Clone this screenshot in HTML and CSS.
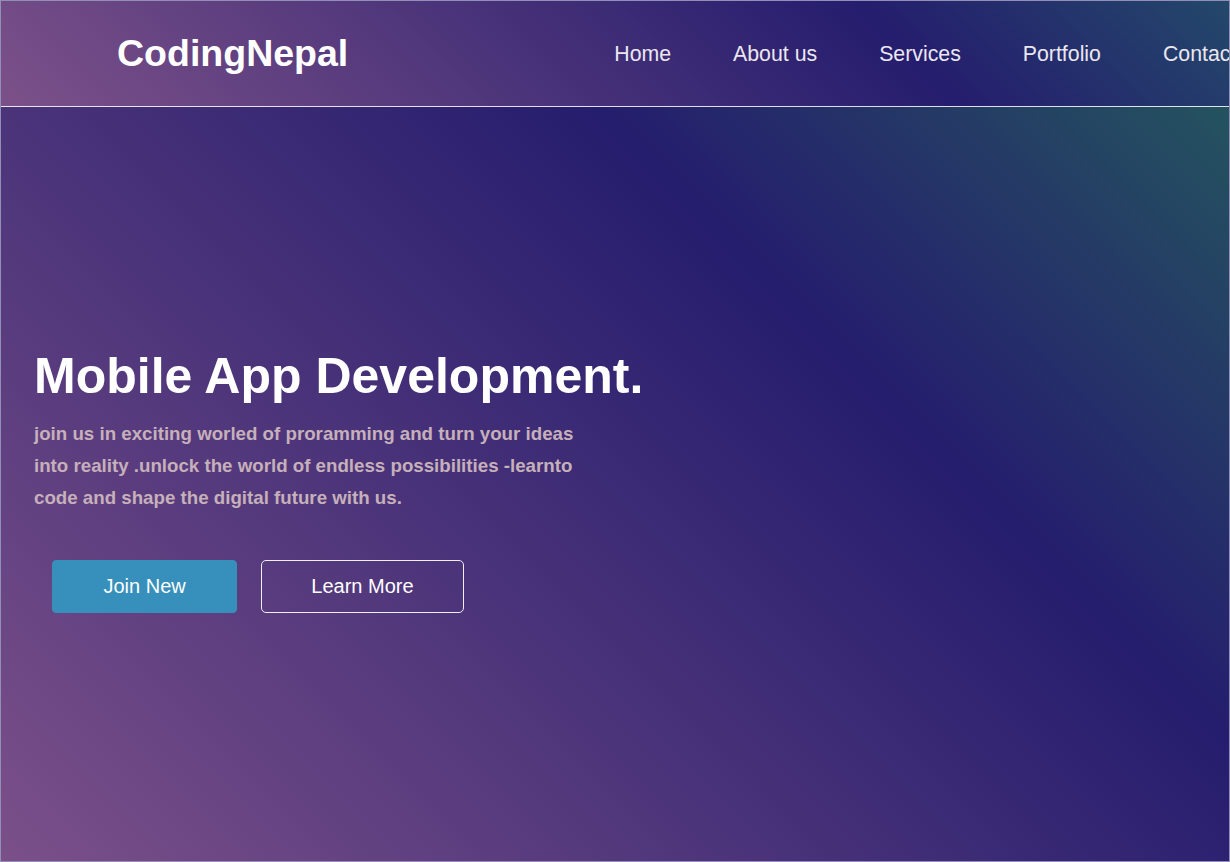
FILE: index.html
```html
<!DOCTYPE html>
<html lang="en">
<head>
<meta charset="utf-8">
<title>CodingNepal</title>
<link rel="stylesheet" href="styles.css">
</head>
<body>
<div class="page">
  <header class="header">
    <a class="logo" href="#">CodingNepal</a>
    <nav class="nav">
      <a href="#">Home</a>
      <a href="#">About us</a>
      <a href="#">Services</a>
      <a href="#">Portfolio</a>
      <a href="#">Contact</a>
    </nav>
  </header>
  <section class="hero">
    <div class="hero-content">
      <h1 class="title">Mobile App Development.</h1>
      <h3 class="lead">join us in exciting worled of proramming and turn your ideas into reality .unlock the world of endless possibilities -learnto code and shape the digital future with us.</h3>
      <div class="buttons">
        <a class="btn btn-primary" href="#">Join New</a>
        <a class="btn btn-outline" href="#">Learn More</a>
      </div>
    </div>
  </section>
</div>
</body>
</html>
```

FILE: styles.css
```css
* { box-sizing: border-box; }
html, body { margin: 0; padding: 0; }
body {
  font-family: "Liberation Sans", Arial, sans-serif;
  background: #251d6e;
}
a { text-decoration: none; color: inherit; }

.page {
  width: 1230px;
  height: 862px;
  border: 1px solid rgba(255, 255, 255, 0.5);
  overflow: hidden;
  display: flex;
  flex-direction: column;
}

.header {
  flex: 0 0 106px;
  display: flex;
  align-items: center;
  padding-left: 116px;
  border-bottom: 1px solid rgba(255, 255, 255, 0.85);
  white-space: nowrap;
  background: linear-gradient(45deg, #7c5189 0%, #251d6e 72%, #23486a 100%);
}

.logo {
  color: #fff;
  font-size: 37.5px;
  font-weight: 700;
  line-height: 1;
  margin-top: 1px;
}

.nav {
  display: flex;
  gap: 62px;
  margin-left: 266px;
  margin-top: 2px;
  flex-shrink: 0;
}
.nav a {
  color: #ebe7f0;
  font-size: 21.3px;
  line-height: 1;
}

.hero {
  flex: 1;
  padding: 240px 0 0 33px;
  background: linear-gradient(45deg, #7b5089 0%, #251d6e 68%, #24535f 100%);
}

.title {
  margin: 0;
  color: #fff;
  font-size: 50px;
  line-height: 58px;
  font-weight: 700;
}

.lead {
  margin: 13px 0 0;
  width: 560px;
  color: #c6b0ba;
  font-size: 18.72px;
  line-height: 32px;
  font-weight: 700;
}

.buttons {
  display: flex;
  gap: 24px;
  margin-top: 46px;
  padding-left: 18px;
}

.btn {
  display: inline-block;
  padding: 14px 49px;
  font-size: 20px;
  line-height: 23px;
  color: #fff;
  border: 1px solid transparent;
}
.btn-primary {
  background: #378fbb;
  border-color: #378fbb;
  border-radius: 4px;
  padding-left: 50.5px;
  padding-right: 50.5px;
}
.btn-outline {
  border-color: #f2eef6;
  border-radius: 5px;
}
```
